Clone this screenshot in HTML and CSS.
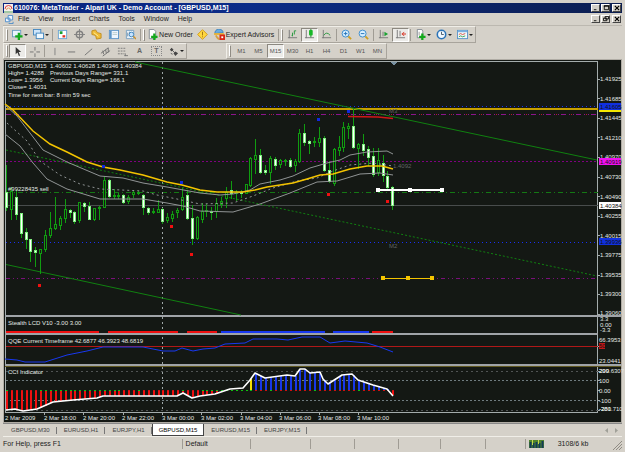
FILE: index.html
```html
<!DOCTYPE html>
<html lang="en">
<head>
<meta charset="utf-8">
<title>610076: MetaTrader - Alpari UK - Demo Account - [GBPUSD,M15]</title>
<link rel="stylesheet" href="styles.css">
</head>
<body>
<header class="titlebar">
  <svg class="app-icon" viewBox="0 0 9 9"><rect width="9" height="9" fill="#f4f0ec"/><path d="M1 5a3.500 3.500 0 0 1 7 0" fill="none" stroke="#e04040"/><path d="M2.500 6a2 2 0 0 1 4 0" fill="none" stroke="#e8a060"/><path d="M0 8h9" stroke="#50a060"/></svg>
  <h1>610076: MetaTrader - Alpari UK - Demo Account - [GBPUSD,M15]</h1>
  <div class="window-buttons">
    <button aria-label="Minimize"><svg viewBox="0 0 7 7"><path d="M1 5.500h3" stroke="#000"/></svg></button>
    <button aria-label="Maximize"><svg viewBox="0 0 7 7"><path d="M1.500 .5h5v5h-5zM1 1.500h6" fill="none" stroke="#000"/></svg></button>
    <button class="close" aria-label="Close"><svg viewBox="0 0 7 7"><path d="M1 1l5 5M6 1L1 6" stroke="#000" stroke-width="1.300"/></svg></button>
  </div>
</header>

<nav class="menubar">
  <svg class="doc-icon" viewBox="0 0 10 10"><path d="M3.500 .5h5v5h-5zM.5 3.500h5v4h-5z" fill="#eef6ff" stroke="#4a8ac8"/><path d="M4 9.500h5v-2" fill="none" stroke="#4a8ac8"/></svg>
  <button>File</button><button>View</button><button>Insert</button><button>Charts</button><button>Tools</button><button>Window</button><button>Help</button>
  <div class="window-buttons">
    <button aria-label="Minimize chart"><svg viewBox="0 0 7 7"><path d="M1 5.500h3" stroke="#000"/></svg></button>
    <button aria-label="Restore chart"><svg viewBox="0 0 7 7"><path d="M2.500 .5h4v3h-4zM.5 2.500h4v3h-4z" fill="#d4d0c8" stroke="#000"/></svg></button>
    <button class="close" aria-label="Close chart"><svg viewBox="0 0 7 7"><path d="M1 1l5 5M6 1L1 6" stroke="#000" stroke-width="1.300"/></svg></button>
  </div>
</nav>

<div class="toolbar standard">
  <i class="grip"></i>
  <button class="drop" aria-label="New chart"><svg viewBox="0 0 12 12"><rect x=".5" y="1.500" width="9" height="7" fill="#eaf4fc" stroke="#6a9cc0"/><path d="M7.500 4v8M3.500 8h8" stroke="#14a81c" stroke-width="2.500"/></svg></button>
  <button class="drop" aria-label="Profiles"><svg viewBox="0 0 12 12"><rect x=".5" y=".5" width="8" height="6" fill="#cfe6fa" stroke="#4488c0"/><rect x="3.500" y="4.500" width="8" height="6" fill="#eef8ff" stroke="#4488c0"/></svg></button>
  <i class="sep"></i>
  <button aria-label="Market Watch"><svg viewBox="0 0 12 12"><rect x="1.500" y="1.500" width="9" height="9" fill="#fff" stroke="#6aa4d4"/><path d="M3 4h3" stroke="#18a030" stroke-width="3"/><path d="M6 8h3" stroke="#e03020" stroke-width="2.500"/></svg></button>
  <button aria-label="Data Window"><svg viewBox="0 0 12 12"><circle cx="6" cy="6" r="3.500" fill="none" stroke="#808080" stroke-width="1.500"/><path d="M6 0v12M0 6h12" stroke="#808080"/></svg></button>
  <button aria-label="Navigator"><svg viewBox="0 0 12 12"><path d="M1 2l4-1 2 3 4 1v5l-5 1-1-4-4-1z" fill="#f0bc38" stroke="#c08c20"/><path d="M3 4l5 4" stroke="#fff2a0"/></svg></button>
  <button aria-label="Terminal"><svg viewBox="0 0 12 12"><rect x="1.500" y="1.500" width="10" height="9" fill="#eef6ff" stroke="#5a94c8"/><path d="M3 2v8" stroke="#5a94c8" stroke-width="2"/><path d="M5 4h5M5 6h5" stroke="#bcc"/></svg></button>
  <button aria-label="Strategy Tester"><svg viewBox="0 0 12 12"><path d="M1.500 1.500h8v9h-8z" fill="#e8f2fa" stroke="#78a0c0"/><path d="M3 4v4M5 3v3" stroke="#789"/><circle cx="7" cy="6" r="2.500" fill="#c8e4ff" stroke="#3a84c0"/><path d="M9 8l3 3" stroke="#c89030" stroke-width="1.500"/></svg></button>
  <i class="sep"></i><i class="grip"></i>
  <button class="labelled"><svg viewBox="0 0 12 12"><path d="M2.500 .5h5l2 2v8h-7z" fill="#fff" stroke="#808890"/><path d="M8 5v7M4.500 8.500h7" stroke="#14a81c" stroke-width="2.500"/></svg>New Order</button>
  <button aria-label="MetaEditor"><svg viewBox="0 0 12 12"><path d="M6 .7L11.300 6 6 11.300.7 6z" fill="#ffd840" stroke="#d09818"/><path d="M6 3v4M6 8v1" stroke="#a07010"/></svg></button>
  <button class="labelled wide"><svg viewBox="0 0 12 12"><path d="M1 5a4 4 0 0 1 9-1z" fill="#6aace0" stroke="#3c80b8"/><path d="M0 5.500h11" stroke="#e8b438" stroke-width="2"/><path d="M2 7q2 4 4 4" stroke="#d8a040" stroke-width="2" fill="none"/><rect x="6" y="6" width="6" height="6" fill="#d82818"/><path d="M8 8h2v2H8z" fill="#fff"/></svg>Expert Advisors</button>
  <i class="sep"></i><i class="grip"></i>
  <button aria-label="Bar chart"><svg viewBox="0 0 12 12"><path d="M2.500 1v9M1 9.500h10" stroke="#777" fill="none"/><path d="M6 8V4M6 7H5M8 6V2M8 2h2" stroke="#24983c" fill="none"/></svg></button>
  <button class="pressed" aria-label="Candlesticks"><svg viewBox="0 0 12 12"><path d="M2.500 1v9M1 9.500h10" stroke="#777" fill="none"/><path d="M7.500 0v9" stroke="#108018"/><rect x="5.500" y="1" width="4" height="6" rx="1" fill="#18b828"/></svg></button>
  <button aria-label="Line chart"><svg viewBox="0 0 12 12"><path d="M2.500 1v9M1 9.500h10" stroke="#777" fill="none"/><path d="M3 7q3-5 7 0" stroke="#24983c" fill="none"/></svg></button>
  <i class="sep"></i>
  <button aria-label="Zoom in"><svg viewBox="0 0 12 12"><path d="M8 8l3 3" stroke="#d0a020" stroke-width="2"/><circle cx="5" cy="5" r="3.800" fill="#d8efff" stroke="#3488cc"/><path d="M5 3v4M3 5h4" stroke="#2070b8"/></svg></button>
  <button aria-label="Zoom out"><svg viewBox="0 0 12 12"><path d="M8 8l3 3" stroke="#d0a020" stroke-width="2"/><circle cx="5" cy="5" r="3.800" fill="#d8efff" stroke="#3488cc"/><path d="M3 5h4" stroke="#2070b8"/></svg></button>
  <i class="sep"></i>
  <button aria-label="Auto scroll"><svg viewBox="0 0 12 12"><path d="M2.500 1v9M1 9.500h10M5.500 3v5" stroke="#777" fill="none"/><path d="M7 3l4 2.500L7 8z" fill="#18a030"/></svg></button>
  <button class="pressed" aria-label="Chart shift"><svg viewBox="0 0 12 12"><path d="M2.500 1v9M1 9.500h10M5.500 2v6" stroke="#777" fill="none"/><path d="M10 3L7 5.500 10 8zM9 5h3v1H9z" fill="#d83020"/></svg></button>
  <i class="sep"></i>
  <button class="drop" aria-label="Indicators"><svg viewBox="0 0 12 12"><path d="M2.500 .5h5l1 2v7h-6z" fill="#fff" stroke="#808890"/><path d="M4.500 3v4" stroke="#999"/><path d="M8 5v7M4.500 8.500h7" stroke="#14a81c" stroke-width="2.500"/></svg></button>
  <button class="drop" aria-label="Periods"><svg viewBox="0 0 12 12"><circle cx="6" cy="6" r="4.600" fill="#f0f8ff" stroke="#2c74b8" stroke-width="1.700"/><path d="M6 3v3h2.500" fill="none" stroke="#456"/></svg></button>
  <button class="drop" aria-label="Templates"><svg viewBox="0 0 12 12"><rect x=".5" y="1.500" width="11" height="9" fill="#f2f8fc" stroke="#5a94c8"/><path d="M1 2.500h10" stroke="#7ab0e0" stroke-width="2"/><path d="M2 6l2-1 2 1 3-1" stroke="#d85040" fill="none"/><path d="M2 8.500l2-1 2 1 3-1" stroke="#38a050" fill="none"/></svg></button>
</div>

<div class="toolbar-row">
<div class="toolbar drawing">
  <i class="grip"></i>
  <button class="pressed" aria-label="Cursor"><svg viewBox="0 0 12 12"><path d="M4 1v8l2-2 1.500 4 1.300-.6L7.300 6.500H10z" fill="#333"/></svg></button>
  <button aria-label="Crosshair"><svg viewBox="0 0 12 12"><path d="M6.500 1v4M6.500 8v4M1 6.500h4M8 6.500h4" stroke="#707070"/></svg></button>
  <i class="sep"></i>
  <button aria-label="Vertical line"><svg viewBox="0 0 12 12"><path d="M6.500 2v8" stroke="#808080"/></svg></button>
  <button aria-label="Horizontal line"><svg viewBox="0 0 12 12"><path d="M2 6.500h8" stroke="#707070"/></svg></button>
  <button aria-label="Trendline"><svg viewBox="0 0 12 12"><path d="M2 10l8-7" stroke="#707070"/></svg></button>
  <button aria-label="Equidistant channel"><svg viewBox="0 0 12 12"><path d="M1 8l8-6M3 11l8-6M3 5l1 4M6 4l1 4M9 2v5" stroke="#707070"/></svg></button>
  <button aria-label="Fibonacci retracement"><svg viewBox="0 0 12 12"><path d="M1 2.500h9M1 5.500h9M1 8.500h7" stroke="#777" stroke-dasharray="2 1"/><path d="M9 8v3M8 10.500h4" stroke="#777"/></svg></button>
  <button class="glyph">A</button>
  <button class="glyph"><span class="boxed">T</span></button>
  <button class="drop" aria-label="Arrows"><svg viewBox="0 0 12 12"><path d="M2 4l2-2 2 2-2 2zM6 8l2-2 3 2-3 3z" fill="#444"/><path d="M4 4l4 4M3 8l2 1" stroke="#555"/></svg></button>
</div>
<div class="toolbar periods">
  <i class="grip"></i>
  <button>M1</button><button>M5</button><button class="pressed">M15</button><button>M30</button><button>H1</button><button>H4</button><button>D1</button><button>W1</button><button>MN</button>
</div>
</div>

<main>
<svg class="chart" viewBox="3 59 619 364" role="img" aria-label="GBPUSD M15 price chart with indicators">
  <rect class="pane" x="4" y="60" width="617" height="362"/>
  <g class="crisp">
    <path class="frame" d="M5 61.500H598M5.500 61V413M597.500 61V413M5 412.500H598"/>
    <path stroke="#a0a4a8" stroke-width="2" d="M5 316H621M5 334H598M5 365H621"/>
    <path stroke="#605820" d="M5 366.500H621"/>
    <path class="frame" d="M598 79.500h2M598 98.500h2M598 118.500h2M598 137.500h2M598 157.500h2M598 177.500h2M598 196.500h2M598 216.500h2M598 235.500h2M598 255.500h2M598 275.500h2M598 294.500h2M598 314.500h2M598 346.500h2M598 371.500h2M598 380.500h2M598 390.500h2M598 400.500h2M598 410.500h2M44.500 412v3M83.500 412v3M123.500 412v3M162.500 412v3M201.500 412v3M241.500 412v3M280.500 412v3M319.500 412v3M358.500 412v3"/>
    <path d="M6 205.500H598" stroke="#484c4c"/>
    <path d="M6 106.500H598" stroke="#1830f0" stroke-dasharray="1 3"/>
    <path d="M6 109H598" stroke="#c8a000" stroke-width="2"/>
    <path d="M6 114.500H598" stroke="#8c148c" stroke-dasharray="5 3 1 3 1 2"/>
    <path d="M16 114.500H598" stroke="#b02020" stroke-dasharray="1 14"/>
    <path d="M6 161.500H598" stroke="#800080" stroke-dasharray="2 2"/>
    <path d="M6 192.500H598" stroke="#147814" stroke-dasharray="5 3 1 3"/>
    <path d="M6 242.500H598" stroke="#1830f0" stroke-dasharray="1 3"/>
    <path d="M6 278.500H598" stroke="#7a107a" stroke-dasharray="4 3 1 3 1 3"/>
    <path d="M162.500 62V412" stroke="#a0a8a8" stroke-dasharray="2 3"/>
    <path d="M6 371.500H598" stroke="#505454" stroke-dasharray="2 3"/>
    <path d="M6 380.500H598M6 400.500H598" stroke="#707c80" stroke-dasharray="2 2"/>
    <path d="M6 410.500H598" stroke="#505454" stroke-dasharray="2 3"/>
  </g>
  <g fill="none" stroke="#108010">
    <path d="M135 62L597 160M6 264.500L241 315"/>
    <path d="M6 150L597 276" stroke-dasharray="2 2"/>
  </g>
  <g id="candles" class="crisp"></g>
  <g fill="none">
    <path class="band" d="M5 105L17 116 43 150 67 162 100 176 123 178 143 183 167 187 200 193 220 195 233 194 250 190 260 184 280 180 293 176 310 168 327 163 340 160 350 155 367 152 387 151 393 154"/>
    <path class="band" stroke-dasharray="2 3" d="M7 123L27 141 40 161 60 175 80 184 100 189 143 191 157 195 177 199 200 204 233 203 253 196 273 188 297 181 317 178 333 171 350 165 373 163 393 166"/>
    <path class="band" d="M5 134L20 146 33 163 47 179 67 189 100 199 143 199 167 203 183 206 200 211 233 212 260 204 290 193 317 182 337 181 347 178 360 174 380 173 393 175"/>
    <path stroke="#f4c400" stroke-width="1.500" d="M5 104L13 110 33 131 50 144 67 152 87 162 103 167 120 170 143 175 167 182 182 185 200 190 217 192 243 192 255 190 267 187 293 183 307 179 320 175 333 174 350 169 367 166 382 166 393 169"/>
    <path stroke="#d01818" stroke-width="1.500" d="M348 116.500L378 117 393 118.500"/>
  </g>
  <g class="crisp">
    <path fill="#1028e0" d="M102 165h3v3h-3zM180 181h3v3h-3zM317 118h3v3h-3zM347 110h3v3h-3z"/>
    <path fill="#f01010" d="M170 225h3v3h-3zM190 253h3v3h-3zM38 284h3v3h-3zM327 193h3v3h-3zM386 200h3v3h-3z"/>
    <path fill="#7890a0" d="M391 62h6v1h-1v1h-1v1h-2v-1h-1v-1h-1z"/>
    <path fill="#fff" d="M378 189h63v2h-63zM376 188h4v4h-4zM408 188h4v4h-4zM440 188h4v4h-4z"/>
    <path fill="#f4c400" d="M382 278h50v1h-50zM381 276h4v4h-4zM406 276h4v4h-4zM430 276h4v4h-4z"/>
    <path stroke="#f01010" stroke-width="2" d="M6 332H99M108 332H178M187 332H217M372 332H393"/>
    <path stroke="#1838f0" stroke-width="2" d="M221 332H325M333 332H369"/>
    <path stroke="#b01818" d="M6 346.500H598"/>
    <path id="histogram-negative" stroke="#f01010" stroke-width="2"/>
    <path id="histogram-positive" stroke="#1838e8" stroke-width="2"/>
    <path stroke="#f4e000" stroke-width="2" d="M251 379V391"/>
    <path id="dots-red" stroke="#d01010"/>
    <path id="dots-green" stroke="#10c010"/>
  </g>
  <path fill="none" stroke="#1838f0" d="M5 359L17 360 25 362 45 362 67 355 87 351 103 347 143 347 163 351 175 351 182 348 193 351 203 349 215 348 225 344 245 343 253 339 277 339 288 340 302 337 320 337 330 343 345 341 367 343 380 347 393 352"/>
  <path id="cci" fill="none" stroke="#fff" stroke-width="1.600" stroke-linejoin="round"/>
  <g class="dim"><text x="389" y="113">M3</text><text x="389" y="248">M2</text><text x="393" y="168">1.4092</text></g>
  <g class="info">
    <text x="8" y="68">GBPUSD,M15&#160; 1.40602 1.40628 1.40346 1.40384</text>
    <text x="8" y="75">High= 1.4288</text><text x="50" y="75">Previous Days Range= 331.1</text>
    <text x="8" y="82">Low= 1.3956</text><text x="50" y="82">Current Days Range= 166.1</text>
    <text x="8" y="89">Close= 1.4031</text>
    <text x="8" y="97">Time for next bar: 8 min 59 sec</text>
    <text x="8" y="191">#99228435 sell</text>
    <text x="8" y="325">Stealth LCD V10 -3.00 3.00</text>
    <text x="8" y="343">QQE Current Timeframe 42.6877 46.3923 48.6819</text>
    <text x="8" y="374">CCI Indicator</text>
  </g>
  <g class="info">
    <text x="600" y="81">1.41925</text><text x="600" y="101">1.41685</text><text x="600" y="120">1.41445</text><text x="600" y="140">1.41210</text><text x="600" y="159">1.40970</text><text x="600" y="179">1.40730</text><text x="600" y="199">1.40490</text><text x="600" y="218">1.40255</text><text x="600" y="238">1.40015</text><text x="600" y="257">1.39775</text><text x="600" y="277">1.39535</text><text x="600" y="296">1.39300</text><text x="600" y="315">1.39060</text>
    <text x="600" y="321">3.3</text><text x="600" y="327">0.00</text><text x="600" y="332">-3.3</text>
    <text x="599" y="342">66.3953</text><text x="599" y="363">23.0441</text>
    <text x="599" y="373">200</text><text x="599" y="373">299.6307</text><text x="599" y="383">100</text><text x="599" y="393">0.00</text><text x="599" y="403">-100</text><text x="599" y="411">-200</text><text x="599" y="411">-281.710</text>
    <text x="5" y="420">2 Mar 2009</text><text x="44" y="420">2 Mar 18:00</text><text x="83" y="420">2 Mar 20:00</text><text x="122" y="420">2 Mar 22:00</text><text x="162" y="420">3 Mar 00:00</text><text x="201" y="420">3 Mar 02:00</text><text x="240" y="420">3 Mar 04:00</text><text x="279" y="420">3 Mar 06:00</text><text x="318" y="420">3 Mar 08:00</text><text x="357" y="420">3 Mar 10:00</text>
  </g>
  <rect x="599" y="109" width="22" height="3" fill="#f4e800"/>
  <rect x="599" y="103" width="22" height="7" fill="#1030e0"/>
  <rect x="599" y="158" width="22" height="7" fill="#f010f0"/>
  <rect x="599" y="202" width="22" height="7" fill="#fff"/>
  <rect x="599" y="238" width="22" height="7" fill="#1030e0"/>
  <rect x="599" y="343" width="6" height="6" fill="#c01818"/>
  <g class="tags"><text x="600" y="109">1.41605</text><text x="600" y="164">1.40919</text><text x="600" y="208">1.40384</text><text x="600" y="244">1.39936</text><text x="599" y="348">50</text></g>
</svg>
</main>

<nav class="tabs">
  <button>GBPUSD,M30</button><button>EURUSD,H1</button><button>EURJPY,H1</button><button class="active">GBPUSD,M15</button><button>EURUSD,M15</button><button>EURJPY,M15</button>
  <span class="scroll"><button aria-label="Scroll left"><svg viewBox="0 0 5 5"><path d="M4 0v5L1 2.500z" fill="#a0a098"/></svg></button><button aria-label="Scroll right"><svg viewBox="0 0 5 5"><path d="M1 0v5l3-2.500z" fill="#a0a098"/></svg></button></span>
</nav>

<footer class="status">
  <span>For Help, press F1</span><span>Default</span><span></span><span></span><span></span><span></span><span></span><span></span>
  <span class="traffic"><svg viewBox="0 0 15 8"><rect width="15" height="8" fill="#50842c"/><path d="M1.500 8V2M4.500 8V3M7.500 8V2M10.500 8V3M13.500 8V1" stroke="#123c58" stroke-width="2"/><path d="M3.500 0v5M9.500 0v4" stroke="#c8d850"/></svg>3108/6 kb</span>
  <svg class="resize" viewBox="0 0 9 9"><path d="M0 9L9 0M3 9l6-6M6 9l3-3" stroke="#908c84"/></svg>
</footer>
<script src="chart.js"></script>
</body>
</html>
```
FILE: styles.css
```css
* { box-sizing: border-box; }
body {
  margin: 0;
  padding: 3px 3px 0;
  background: #d5d1c9;
  color: #222;
  font: 7px/10px "Liberation Sans", Arial, sans-serif;
}
button {
  margin: 0;
  padding: 0;
  border: 0;
  background: none;
  color: inherit;
  font: inherit;
}
svg { display: block; }

.titlebar {
  display: flex;
  align-items: center;
  height: 10px;
  padding: 0 1px;
  gap: 1px;
  background: linear-gradient(90deg, #0a2480, #0c2c88 40%, #0c1e50);
  color: #fff;
}
.titlebar h1 { margin: 0; flex: 1; font-size: 7px; line-height: 10px; white-space: nowrap; }
.app-icon { width: 9px; height: 9px; }
.window-buttons { display: flex; margin-left: auto; gap: 1px; }
.window-buttons button {
  width: 9px;
  height: 8px;
  padding: 0 1px;
  background: #d4d0c8;
  border: 1px solid;
  border-color: #fff #444 #444 #fff;
}
.window-buttons svg { width: 6px; height: 6px; }
.window-buttons .close { margin-left: 1px; }

.menubar {
  display: flex;
  align-items: center;
  height: 13px;
  padding: 0 1px 0 2px;
  gap: 9px;
  border-bottom: 1px solid #bcb8b0;
}
.doc-icon { width: 9px; height: 9px; margin-right: -5px; }

.toolbar {
  display: flex;
  align-items: center;
  width: max-content;
  height: 17px;
  padding-left: 1px;
  border: 1px solid;
  border-color: #f0eee8 #a8a49c #a8a49c #f0eee8;
}
.toolbar button { display: flex; align-items: center; justify-content: center; width: 17px; height: 14px; }
.toolbar svg { width: 11px; height: 11px; flex: none; }
.toolbar .drop { width: 21px; gap: 1px; }
.drop::after { content: ""; border: 2px solid transparent; border-top-color: #222; border-bottom: 0; }
.toolbar .labelled { width: 48px; gap: 1px; white-space: nowrap; }
.toolbar .wide { width: 66px; }
.toolbar .pressed { background: #ecebe8; border: 1px solid; border-color: #8c8880 #fff #fff #8c8880; }
.grip { width: 2px; height: 12px; margin: 0 1px; border: 1px solid; border-color: #fff #908c84 #908c84 #fff; }
.sep { width: 1px; height: 12px; margin: 0 1px; background: #a09c94; }
.toolbar-row { display: flex; gap: 39px; height: 16px; }
.toolbar-row .toolbar { height: 16px; }
.periods { color: #555; font-size: 6px; }
.periods .grip { margin-right: 2px; }
.glyph { color: #666; font-weight: bold; }
.boxed { border: 1px dotted #888; padding: 0 2px; line-height: 8px; }

.chart { width: 100%; height: auto; overflow: visible; background: #b0aca4; }
.crisp { shape-rendering: crispEdges; }
.pane { fill: #141814; }
.frame { stroke: #a4acac; fill: none; }
.band { stroke: #909494; }
.chart text { font-size: 6px; }
.info { fill: #e4e8e4; }
.dim { fill: #606464; }
.tags { fill: #101010; }
.wick { stroke: #109c10; fill: none; }
.hollow { stroke: #109c10; fill: #141814; }
.filled { fill: #fff; stroke: #80f080; }

.tabs {
  display: flex;
  align-items: stretch;
  height: 14px;
  padding-left: 1px;
  border-top: 1px solid #888;
  border-bottom: 1px solid #f0eee8;
  font-size: 6px;
  color: #444;
}
.tabs > button { position: relative; padding: 0 7px; }
.tabs > button::after { content: ""; position: absolute; right: 0; top: 3px; height: 7px; border-right: 1px solid #777; }
.tabs > .active { background: #fff; color: #000; border: 1px solid #444; border-top: 0; padding: 0 6px; }
.tabs > .active::after { display: none; }
.scroll { display: flex; align-items: center; gap: 5px; margin-left: auto; padding-right: 3px; }
.scroll svg { width: 5px; height: 5px; }

.status {
  display: grid;
  grid-template-columns: 178fr 68fr 60fr 44fr 44fr 42fr 44fr 40fr 88fr 9px;
  align-items: center;
  height: 13px;
}
.status > span { height: 10px; padding-left: 3px; line-height: 10px; border-left: 1px solid #a09c94; white-space: nowrap; }
.status > span:first-child { border: 0; padding: 0; }
.status .traffic { display: flex; align-items: center; gap: 14px; }
.traffic svg { width: 15px; height: 8px; }
.resize { width: 9px; height: 9px; align-self: end; }
```
FILE: chart.js
```js
// Each candle: high, body top, body bottom, low, filled (1) or hollow (0).
const candles = [
  [165,192,207,210,1],[187,191,209,219,0],[190,197,214,219,1],[213,213,233,237,1],[228,232,239,248,1],
  [239,239,251,261,1],[247,250,252,266,1],[249,249,253,273,0],[230,235,249,251,0],[212,228,235,237,0],
  [197,224,228,229,0],[216,218,225,229,0],[199,209,218,222,0],[209,210,212,217,1],[211,212,221,223,1],
  [202,202,220,222,0],[202,203,206,211,1],[202,206,219,219,1],[208,208,219,220,0],[206,207,208,219,0],
  [176,180,207,207,0],[179,180,196,197,1],[189,195,196,198,0],[193,195,196,198,0],[194,195,202,203,1],
  [195,197,201,203,0],[190,192,194,197,0],[191,192,193,194,0],[194,195,207,214,1],[207,208,212,214,1],
  [208,211,212,213,0],[200,209,212,212,0],[208,209,221,223,1],[213,217,220,222,0],[211,214,218,221,0],
  [208,210,212,217,0],[188,197,209,210,0],[190,195,218,219,1],[205,218,238,244,1],[216,217,238,239,0],
  [203,211,219,222,0],[204,210,211,216,0],[207,211,212,219,1],[198,203,211,217,0],[197,201,204,207,0],
  [187,192,198,207,0],[181,190,193,198,1],[190,192,193,200,0],[190,192,193,197,1],[184,184,193,193,0],
  [157,158,185,186,0],[139,155,159,173,0],[149,155,172,173,1],[165,170,172,174,1],[156,158,172,183,0],
  [157,159,165,169,1],[159,160,164,167,0],[159,160,161,165,0],[158,160,166,167,1],[159,161,165,171,0],
  [129,133,161,162,0],[124,133,142,145,1],[140,141,143,153,1],[137,141,142,146,0],[127,138,142,146,0],
  [136,138,170,171,1],[161,170,181,182,1],[148,149,183,185,0],[136,147,150,155,0],[122,127,147,151,0],
  [123,126,128,138,0],[109,126,147,148,1],[143,144,148,168,0],[134,144,150,155,1],[146,149,157,165,1],
  [148,156,174,176,1],[148,160,172,175,0],[155,163,175,181,1],[171,176,187,189,1],[186,187,205,209,1]
];

const cci = [
  [6,410],[15,409],[23,411],[37,409],[53,402],[73,400],[97,398],[103,396],[147,396],[177,396],
  [183,393],[192,398],[200,396],[215,394],[230,389],[243,388],[250,380],[255,373],[265,378],
  [287,375],[295,376],[300,369],[305,369],[310,373],[320,372],[323,379],[328,384],[342,375],
  [352,374],[358,380],[373,385],[387,389],[393,396]
];

const STEP = 4.89;
const ZERO = 391;
const xOf = i => Math.round(6 + i * STEP);

document.getElementById("candles").innerHTML = candles.map(([high, top, bottom, low, filled], i) => {
  const x = xOf(i);
  const wick = `M${x + .5} ${high}V${low + 1}`;
  return `<path class="wick" d="${wick}"/>` +
    `<rect class="${filled ? "filled" : "hollow"}" x="${x - .5}" y="${top + .5}" width="2" height="${Math.max(1, bottom - top)}"/>`;
}).join("");

function cciAt(x) {
  for (let k = 1; k < cci.length; k++) {
    const [x0, y0] = cci[k - 1], [x1, y1] = cci[k];
    if (x <= x1) return y0 + (y1 - y0) * (x - x0) / (x1 - x0);
  }
  return cci[cci.length - 1][1];
}

const paths = { negative: "", positive: "", red: "", green: "" };
candles.forEach((_, i) => {
  const x = xOf(i), y = cciAt(x);
  if (y > ZERO + 1) paths.negative += `M${x + 1} ${ZERO}V${Math.round(y)}`;
  else if (i > 50 && y < ZERO - 1) paths.positive += `M${x + 1} ${ZERO}V${Math.round(y)}`;
  const green = (i > 6 && i < 24) || (i > 39 && i < 51) || i % 9 === 0;
  paths[green ? "green" : "red"] += `M${x} 390.5h2`;
});
document.getElementById("histogram-negative").setAttribute("d", paths.negative);
document.getElementById("histogram-positive").setAttribute("d", paths.positive);
document.getElementById("dots-red").setAttribute("d", paths.red);
document.getElementById("dots-green").setAttribute("d", paths.green);
document.getElementById("cci").setAttribute("d", "M" + cci.map(p => p.join(" ")).join("L"));
```
